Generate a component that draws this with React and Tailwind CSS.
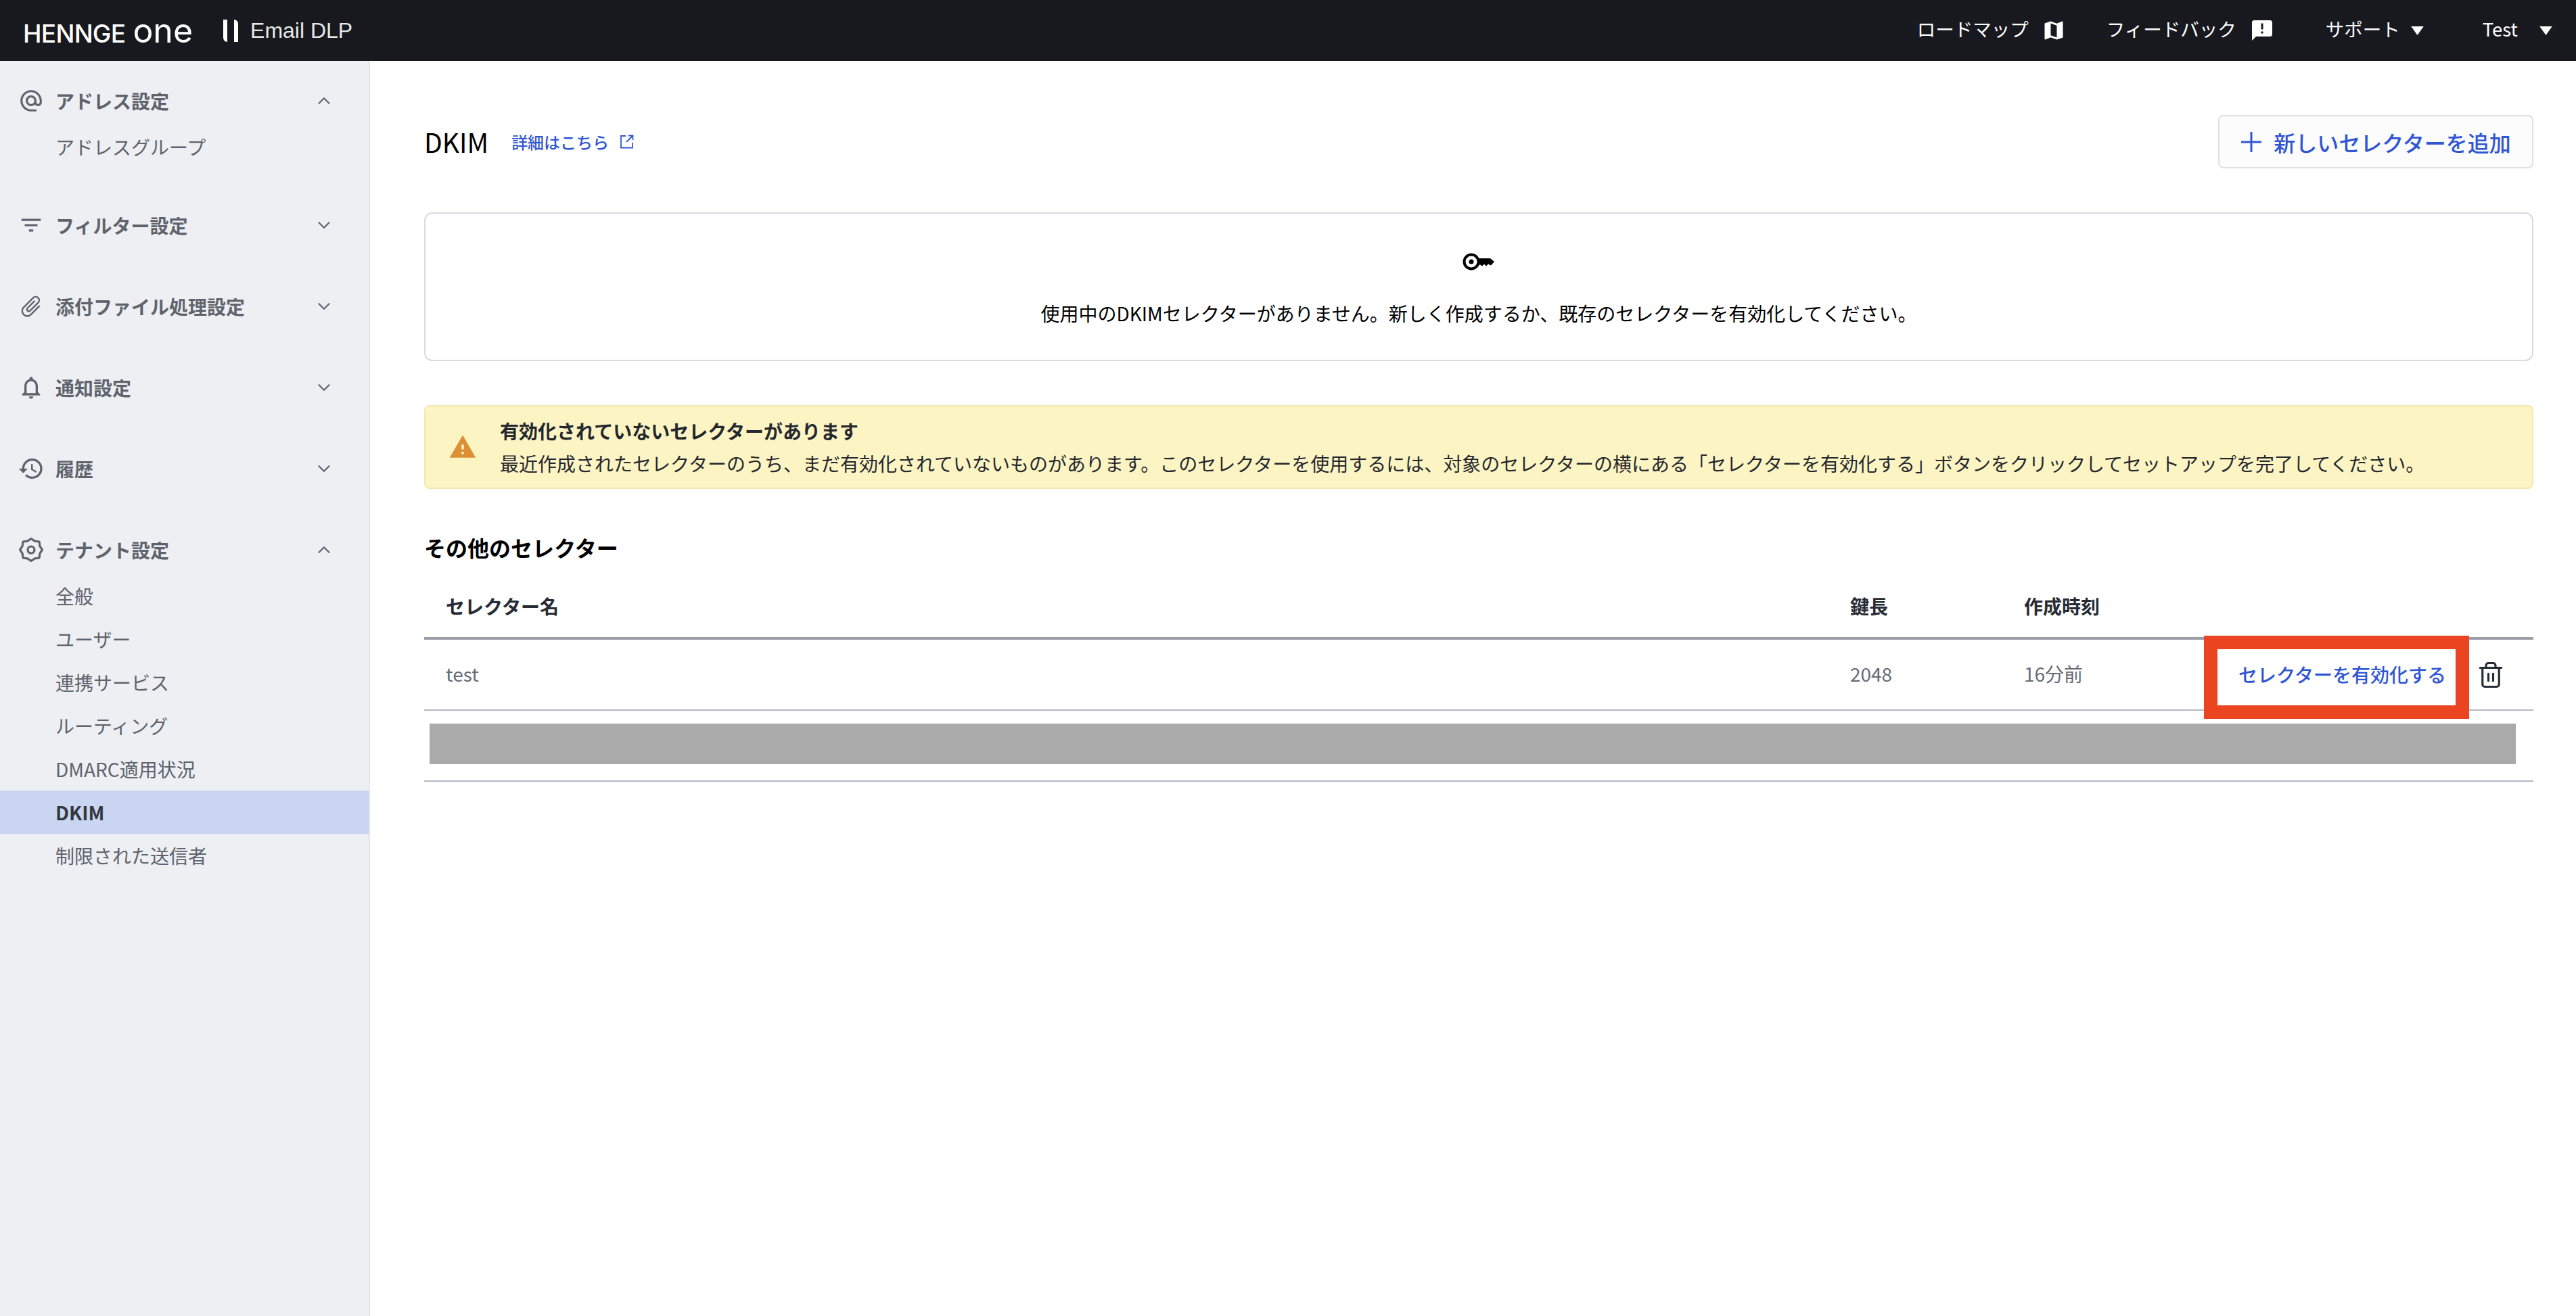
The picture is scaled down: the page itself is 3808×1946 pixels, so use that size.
import { ChevronDown, ChevronUp, Trash2 } from "lucide-react";
import {
  MdAlternateEmail,
  MdFilterList,
  MdHistory,
  MdMap,
  MdOutlineAttachFile,
  MdOutlineNotifications,
  MdAnnouncement,
  MdWarning,
} from "react-icons/md";

const jp = "font-['Noto_Sans_CJK_JP','Noto_Sans',sans-serif]";

/* ================= ICONS ================= */
function GearIcon({ className }) {
  return (
    <svg viewBox="0 0 36 36" fill="none" stroke="currentColor" strokeWidth="3.2" strokeLinejoin="round" className={className}>
      <polygon points="18,1.5 23.4,5.1 30,6 30.9,12.6 34.5,18 30.9,23.4 30,30 23.4,30.9 18,34.5 12.6,30.9 6,30 5.1,23.4 1.5,18 5.1,12.6 6,6 12.6,5.1" />
      <circle cx="18" cy="18" r="5" />
    </svg>
  );
}

function KeyIcon({ className }) {
  return (
    <svg viewBox="0 0 48 26" className={className} fill="currentColor">
      <circle cx="13" cy="13" r="10.5" fill="none" stroke="currentColor" strokeWidth="4" />
      <circle cx="13" cy="13" r="3.5" />
      <path d="M22 8H41L47 13L42 18.5L38 16.5L35 19.5L32 16.5L29 19.5L26 17.5H22Z" />
    </svg>
  );
}

function Caret({ className }) {
  return (
    <svg viewBox="0 0 20 14" fill="currentColor" className={className}>
      <polygon points="0,0 20,0 10,14" />
    </svg>
  );
}

function PlusIcon({ className }) {
  return (
    <svg viewBox="0 0 32 32" fill="none" stroke="currentColor" strokeWidth="3" className={className}>
      <path d="M16 1V31M1 16H31" />
    </svg>
  );
}

function ExternalIcon({ className }) {
  return (
    <svg viewBox="0 0 21 21" fill="none" stroke="currentColor" strokeWidth="1.8" className={className}>
      <path d="M9 2H2V19.5H19V12M10 11L19 2M13 1.5H19.5V8" />
    </svg>
  );
}

/* ================= SIDEBAR DATA ================= */
const sections = [
  { title: "アドレス設定", icon: <MdAlternateEmail className="w-[38px] h-[38px]" />, open: true, items: ["アドレスグループ"] },
  { title: "フィルター設定", icon: <MdFilterList className="w-[38px] h-[38px]" /> },
  { title: "添付ファイル処理設定", icon: <MdOutlineAttachFile className="w-[38px] h-[38px] rotate-45" /> },
  { title: "通知設定", icon: <MdOutlineNotifications className="w-[44px] h-[44px]" /> },
  { title: "履歴", icon: <MdHistory className="w-[40px] h-[40px]" /> },
  {
    title: "テナント設定",
    icon: <GearIcon className="w-[36px] h-[36px]" />,
    open: true,
    items: ["全般", "ユーザー", "連携サービス", "ルーティング", "DMARC適用状況", "DKIM", "制限された送信者"],
  },
];

function Sidebar() {
  return (
    <aside className="w-[547px] shrink-0 bg-[#edeff3] border-r-2 border-[#e3e5ea] pt-[26px] text-[#5f636c]">
      {sections.map((section) => (
        <div key={section.title} className="mb-[51px]">
          <div className="h-[69px] pb-[3px] flex items-center pl-[26px] pr-[51px]">
            <span className="w-[40px] flex justify-center shrink-0">{section.icon}</span>
            <span className="ml-[16px] flex-1 text-[28px] font-bold">{section.title}</span>
            {section.open ? (
              <ChevronUp className="w-[30px] h-[30px]" strokeWidth={1.8} />
            ) : (
              <ChevronDown className="w-[30px] h-[30px]" strokeWidth={1.8} />
            )}
          </div>
          {section.items &&
            section.items.map((item) => (
              <div
                key={item}
                className={
                  item === "DKIM"
                    ? "h-[64px] flex items-center pl-[82px] text-[28px] font-bold bg-[#c9d5f1] text-[#33373f]"
                    : "h-[64px] flex items-center pl-[82px] text-[28px]"
                }
              >
                {item}
              </div>
            ))}
        </div>
      ))}
    </aside>
  );
}

/* ================= HEADER ================= */
function Header() {
  return (
    <header className="h-[90px] bg-[#17191e] text-white flex items-center pl-[34px] pr-[35px] shrink-0">
      <div className="flex items-baseline font-['Inter',sans-serif]">
        <span className="text-[37px] leading-none font-medium tracking-[-0.02em]">HENNGE</span>
        <span className="text-[50px] leading-none ml-[11px]">one</span>
      </div>
      <div className="flex ml-[45px] gap-[10px]">
        <div className="w-[6px] h-[33px] bg-white rounded-bl-md" />
        <div className="w-[6px] h-[33px] bg-white rounded-tr-md" />
      </div>
      <span className="ml-[18px] text-[32px] text-[#e8e8e8] font-['Liberation_Sans',sans-serif]">Email DLP</span>

      <nav className="ml-auto flex items-center text-[27.5px]">
        <span className="pb-[4px]">ロードマップ</span>
        <MdMap className="w-[36px] h-[36px] ml-[19px]" />
        <span className="ml-[60px] pb-[4px]">フィードバック</span>
        <MdAnnouncement className="w-[36px] h-[36px] ml-[20px]" />
        <span className="ml-[76px] pb-[4px]">サポート</span>
        <Caret className="w-[19px] h-[13px] ml-[16px]" />
        <span className="ml-[87px] pb-[4px]">Test</span>
        <Caret className="w-[19px] h-[13px] ml-[32px]" />
      </nav>
    </header>
  );
}

/* ================= MAIN ================= */
function Main() {
  return (
    <main className="flex-1 min-w-0 pl-[80px] pr-[63px] pt-[80px]">
      <div className="flex items-center justify-between">
        <div className="flex items-center">
          <h1 className="text-[39px] text-black font-normal">DKIM</h1>
          <a className="ml-[34px] text-[24px] text-[#2f56d3] font-medium">詳細はこちら</a>
          <ExternalIcon className="w-[21px] h-[21px] ml-[16px] text-[#2f56d3]" />
        </div>
        <button className="w-[466px] h-[79px] flex items-center justify-center bg-[#fcfcfd] border-2 border-[#dfe0e2] rounded-lg text-[32px] font-medium text-[#2f56d3]">
          <PlusIcon className="w-[32px] h-[32px]" />
          <span className="ml-[17px]">新しいセレクターを追加</span>
        </button>
      </div>

      <div className="mt-[65px] h-[220px] border-2 border-[#d9dbe2] rounded-xl flex flex-col items-center pt-[58px]">
        <KeyIcon className="w-[48px] h-[26px] text-black" />
        <p className="mt-[43px] text-[28px] leading-[40px] text-black">
          使用中のDKIMセレクターがありません。新しく作成するか、既存のセレクターを有効化してください。
        </p>
      </div>

      <div className="mt-[65px] h-[124px] bg-[#fcf4c3] border-2 border-[#f2e8b0] rounded-lg flex items-center pl-[34px]">
        <MdWarning className="w-[42px] h-[42px] text-[#dd8f36] shrink-0" />
        <div className="ml-[34px] text-[28px] leading-[48px] text-[#24272e]">
          <p className="font-bold">有効化されていないセレクターがあります</p>
          <p>
            最近作成されたセレクターのうち、まだ有効化されていないものがあります。このセレクターを使用するには、対象のセレクターの横にある「セレクターを有効化する」ボタンをクリックしてセットアップを完了してください。
          </p>
        </div>
      </div>

      <h2 className="mt-[64px] text-[32px] leading-[44px] font-bold text-black">その他のセレクター</h2>

      <div className="mt-[23px] h-[92px] pb-[4px] grid grid-cols-[2108px_257px_1fr] items-center border-b-4 border-[#9a9ea9] text-[28px] font-bold text-[#272b33]">
        <span className="pl-[32px]">セレクター名</span>
        <span>鍵長</span>
        <span>作成時刻</span>
      </div>
      <div className="h-[105px] grid grid-cols-[2108px_257px_1fr_auto] items-center border-b-2 border-[#b6b9c6] text-[28px] text-[#666b75]">
        <span className="pl-[32px] pb-[4px]">test</span>
        <span className="pb-[4px]">2048</span>
        <span className="pb-[4px]">16分前</span>
        <div className="flex items-center pr-[42px]">
          <div className="relative">
            <button className="h-[83px] w-[352px] flex items-center justify-end pr-[14px] pb-[2px] text-[28px] font-medium text-[#2f56d3]">
              セレクターを有効化する
            </button>
            {/* annotation frame */}
            <div className="absolute -inset-x-[20px] -top-[16px] -bottom-[24px] border-[20px] border-[#ea4520]" />
          </div>
          <Trash2 className="ml-[31px] w-[42px] h-[42px] text-[#272b33]" strokeWidth={1.8} />
        </div>
      </div>
      <div className="h-[105px] border-b-2 border-[#b6b9c6] pt-[19px] pl-[8px] pr-[26px]">
        <div className="h-[60px] bg-[#aaaaaa]" />
      </div>
    </main>
  );
}

/* ================= PAGE ================= */
export default function App() {
  return (
    <div className={`min-h-screen flex flex-col bg-white ${jp}`}>
      <Header />
      <div className="flex flex-1">
        <Sidebar />
        <Main />
      </div>
    </div>
  );
}
